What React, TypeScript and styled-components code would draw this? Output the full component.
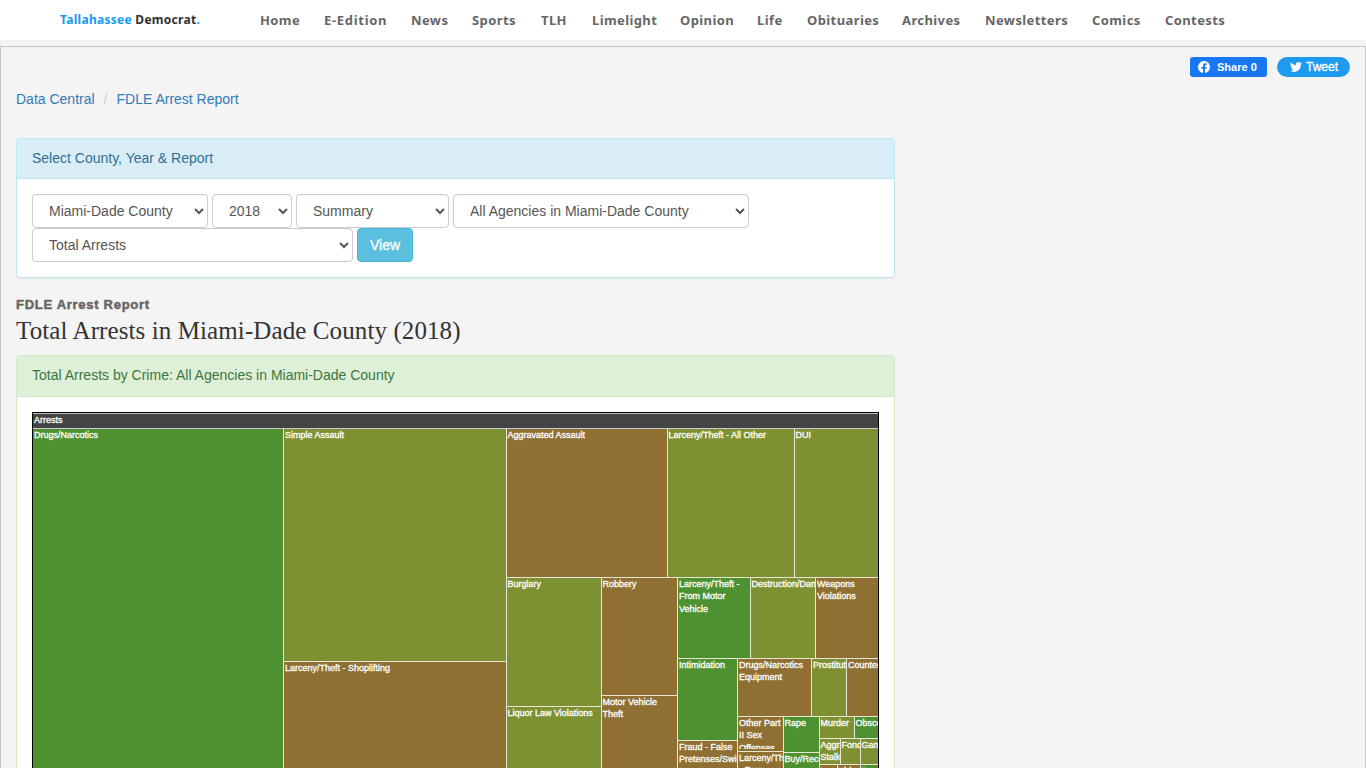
import React from "react";
import styled, { createGlobalStyle } from "styled-components";

const GREEN = "#4d9130";
const OLIVE = "#7e9132";
const BROWN = "#8f7032";

interface TreeNode {
  size: number;
  label?: string;
  color?: string;
  dir?: "row" | "column";
  children?: TreeNode[];
}

const cell = (size: number, label: string, color: string): TreeNode => ({
  size,
  label,
  color
});
const row = (size: number, children: TreeNode[]): TreeNode => ({
  size,
  dir: "row",
  children
});
const column = (size: number, children: TreeNode[]): TreeNode => ({
  size,
  dir: "column",
  children
});

const smallCrimes = column(60, [
  row(22, [cell(35, "Murder", OLIVE), cell(25, "Obscenity", GREEN)]),
  row(26, [
    cell(21, "Aggravated Stalking", OLIVE),
    cell(20, "Fondling", OLIVE),
    cell(19, "Gambling", OLIVE)
  ]),
  row(100, [
    cell(18, "Larceny", BROWN),
    cell(23, "Video", BROWN),
    cell(19, "Purse", GREEN)
  ])
]);

const arrests: TreeNode[] = [
  cell(251, "Drugs/Narcotics", GREEN),
  column(222.5, [
    cell(233, "Simple Assault", OLIVE),
    cell(200, "Larceny/Theft - Shoplifting", BROWN)
  ]),
  column(373.5, [
    row(149, [
      cell(161, "Aggravated Assault", BROWN),
      cell(127, "Larceny/Theft - All Other", OLIVE),
      cell(85.5, "DUI", OLIVE)
    ]),
    row(280, [
      column(95, [
        cell(129, "Burglary", OLIVE),
        cell(151, "Liquor Law Violations", OLIVE)
      ]),
      column(76.5, [
        cell(118, "Robbery", BROWN),
        cell(162, "Motor Vehicle Theft", BROWN)
      ]),
      column(202, [
        row(81, [
          cell(72.5, "Larceny/Theft - From Motor Vehicle", GREEN),
          cell(65.5, "Destruction/Damage", OLIVE),
          cell(64, "Weapons Violations", BROWN)
        ]),
        row(199, [
          column(60, [
            cell(82, "Intimidation", GREEN),
            cell(117, "Fraud - False Pretenses/Swindle", BROWN)
          ]),
          column(142, [
            row(58, [
              cell(74, "Drugs/Narcotics Equipment", BROWN),
              cell(35, "Prostitution", OLIVE),
              cell(33, "Counterfeiting", BROWN)
            ]),
            row(141, [
              column(45.5, [
                cell(35, "Other Part II Sex Offenses", BROWN),
                cell(106, "Larceny/Theft - From Building", BROWN)
              ]),
              column(36, [
                cell(36, "Rape", GREEN),
                cell(105, "Buy/Receive", GREEN)
              ]),
              smallCrimes
            ])
          ])
        ])
      ])
    ])
  ])
];

const TreeItem: React.FC<{ node: TreeNode }> = ({ node }) =>
  node.children ? (
    <Group size={node.size} dir={node.dir}>
      {node.children.map((child, i) => (
        <TreeItem key={i} node={child} />
      ))}
    </Group>
  ) : (
    <Cell size={node.size} color={node.color}>
      <CellLabel>{node.label}</CellLabel>
    </Cell>
  );

const navItems = [
  { label: "Home", width: 64 },
  { label: "E-Edition", width: 87, spacing: 0.7 },
  { label: "News", width: 61 },
  { label: "Sports", width: 69 },
  { label: "TLH", width: 51 },
  { label: "Limelight", width: 88 },
  { label: "Opinion", width: 77 },
  { label: "Life", width: 50 },
  { label: "Obituaries", width: 95 },
  { label: "Archives", width: 83 },
  { label: "Newsletters", width: 107 },
  { label: "Comics", width: 73 },
  { label: "Contests", width: 62 }
];

const filters = [
  { value: "Miami-Dade County", width: 176 },
  { value: "2018", width: 80 },
  { value: "Summary", width: 153 },
  { value: "All Agencies in Miami-Dade County", width: 296 },
  { value: "Total Arrests", width: 321 }
];

const App: React.FC = () => (
  <>
    <GlobalStyle />
    <Header>
      <Logo>
        <LogoBlue>Tallahassee</LogoBlue> Democrat<LogoBlue>.</LogoBlue>
      </Logo>
      <Nav>
        {navItems.map(item => (
          <NavLink key={item.label} width={item.width} spacing={item.spacing}>
            {item.label}
          </NavLink>
        ))}
      </Nav>
    </Header>
    <Page>
      <Social>
        <ShareButton>
          <svg width="12" height="12" viewBox="0 0 24 24">
            <path
              fill="#fff"
              d="M24 12a12 12 0 1 0-13.9 11.85v-8.38H7.08V12h3.02V9.36c0-3 1.8-4.67 4.53-4.67 1.32 0 2.69.24 2.69.24v2.95H15.8c-1.5 0-1.96.93-1.96 1.87V12h3.33l-.53 3.47h-2.8v8.38A12 12 0 0 0 24 12z"
            />
          </svg>
          <span>Share 0</span>
        </ShareButton>
        <TweetButton>
          <svg width="12" height="12" viewBox="0 0 24 24">
            <path
              fill="#fff"
              d="M23.95 4.57a10 10 0 0 1-2.82.77 4.96 4.96 0 0 0 2.16-2.72c-.95.55-2 .96-3.13 1.18a4.92 4.92 0 0 0-8.38 4.48C7.69 8.1 4.07 6.13 1.64 3.16a4.92 4.92 0 0 0 1.52 6.57 4.9 4.9 0 0 1-2.23-.61v.06a4.92 4.92 0 0 0 3.95 4.83 5 5 0 0 1-2.21.08 4.94 4.94 0 0 0 4.6 3.42A9.87 9.87 0 0 1 0 19.54a13.99 13.99 0 0 0 7.55 2.21c9.05 0 14-7.5 14-13.98 0-.21 0-.42-.02-.63a9.94 9.94 0 0 0 2.42-2.57z"
            />
          </svg>
          <span>Tweet</span>
        </TweetButton>
      </Social>
      <Breadcrumb>
        <a>Data Central</a>
        <Slash>/</Slash>
        <a>FDLE Arrest Report</a>
      </Breadcrumb>
      <Content>
        <FilterPanel>
          <InfoHeading>Select County, Year &amp; Report</InfoHeading>
          <FilterBody>
            {filters.map(filter => (
              <Select key={filter.value} width={filter.width}>
                <option>{filter.value}</option>
              </Select>
            ))}
            <ViewButton>View</ViewButton>
          </FilterBody>
        </FilterPanel>
        <Kicker>FDLE Arrest Report</Kicker>
        <Title>Total Arrests in Miami-Dade County (2018)</Title>
        <ChartPanel>
          <ChartHeading>
            Total Arrests by Crime: All Agencies in Miami-Dade County
          </ChartHeading>
          <ChartBody>
            <Treemap>
              <TreemapHeader>Arrests</TreemapHeader>
              <TreemapBody>
                {arrests.map((node, i) => (
                  <TreeItem key={i} node={node} />
                ))}
              </TreemapBody>
            </Treemap>
          </ChartBody>
        </ChartPanel>
      </Content>
    </Page>
  </>
);

const GlobalStyle = createGlobalStyle`
  * {
    box-sizing: border-box;
  }
  body {
    margin: 0;
    background-color: #f4f4f4;
    font-family: "Liberation Sans", Arial, sans-serif;
    font-size: 14px;
    line-height: 20px;
    color: #333;
  }
`;

const Header = styled.header`
  display: flex;
  height: 40px;
  padding-left: 60px;
  background-color: white;
  line-height: 40px;
  white-space: nowrap;
`;

const Logo = styled.div`
  width: 200px;
  font-family: "Noto Sans", sans-serif;
  font-weight: 700;
  font-size: 12px;
  letter-spacing: 0.28px;
  color: #303030;
`;

const LogoBlue = styled.span`
  color: #1698f3;
`;

const Nav = styled.nav`
  display: flex;
`;

const NavLink = styled.a<{ width: number; spacing?: number }>`
  flex: 0 0 ${props => props.width}px;
  font-family: "Noto Sans", sans-serif;
  font-weight: 700;
  font-size: 13px;
  letter-spacing: ${props => props.spacing || 0.4}px;
  color: #666;
`;

const Page = styled.main`
  height: calc(100vh - 46px);
  margin-top: 6px;
  padding: 10px 15px 0;
  border: 1px solid #c6c6c6;
  border-bottom: 0;
  overflow: hidden;
`;

const Social = styled.div`
  display: flex;
  justify-content: flex-end;
  gap: 10px;
  height: 20px;
`;

const ShareButton = styled.div`
  display: flex;
  align-items: center;
  gap: 7px;
  width: 77px;
  padding-left: 8px;
  border-radius: 3px;
  background-color: #1877f2;
  font-weight: 700;
  font-size: 11px;
  color: white;
`;

const TweetButton = styled.div`
  display: flex;
  align-items: center;
  gap: 4px;
  width: 73px;
  padding-left: 13px;
  border-radius: 10px;
  background-color: #1d9bf0;
  font-size: 12px;
  -webkit-text-stroke: 0.3px white;
  color: white;
`;

const Breadcrumb = styled.div`
  display: flex;
  margin-top: 12px;
  color: #337ab7;
`;

const Slash = styled.span`
  padding: 0 9px;
  color: #ccc;
`;

const Content = styled.div`
  width: 879px;
  margin-top: 29px;
`;

const Panel = styled.section`
  border: 1px solid;
  border-radius: 4px;
  background-color: white;
  box-shadow: 0 1px 1px rgba(0, 0, 0, 0.05);
`;

const FilterPanel = styled(Panel)`
  height: 140px;
  border-color: #bce8f1;
`;

const ChartPanel = styled(Panel)`
  border-color: #d6e9c6;
`;

const PanelHeading = styled.div`
  padding: 9px 15px 11px;
  border-bottom: 1px solid;
  border-radius: 3px 3px 0 0;
`;

const InfoHeading = styled(PanelHeading)`
  padding-bottom: 10px;
  border-color: #bce8f1;
  background-color: #d9edf7;
  color: #31708f;
`;

const ChartHeading = styled(PanelHeading)`
  border-color: #d6e9c6;
  background-color: #dff0d8;
  color: #3c763d;
`;

const FilterBody = styled.div`
  display: flex;
  flex-wrap: wrap;
  column-gap: 4px;
  padding: 15px;
`;

const Select = styled.select<{ width: number }>`
  width: ${props => props.width}px;
  height: 34px;
  padding: 6px 0 6px 12px;
  border: 1px solid #ccc;
  border-radius: 4px;
  background-color: white;
  box-shadow: inset 0 1px 1px rgba(0, 0, 0, 0.03);
  font-family: inherit;
  font-size: 14px;
  color: #555;
`;

const ViewButton = styled.button`
  width: 56px;
  height: 34px;
  padding: 0;
  border: 1px solid #46b8da;
  border-radius: 4px;
  background-color: #5bc0de;
  font-family: inherit;
  font-size: 14px;
  -webkit-text-stroke: 0.3px white;
  color: white;
`;

const Kicker = styled.div`
  margin-top: 17px;
  font-weight: 700;
  font-size: 13px;
  -webkit-text-stroke: 0.5px #666;
  letter-spacing: 0.72px;
  color: #666;
`;

const Title = styled.h1`
  margin: 1px 0 9px;
  font-family: "Liberation Serif", serif;
  font-weight: 400;
  font-size: 25px;
  line-height: 30px;
  letter-spacing: 0.1px;
  color: #333;
`;

const ChartBody = styled.div`
  padding: 15px;
`;

const Treemap = styled.div`
  width: 847px;
  border: 1px solid black;
  font-size: 9px;
  line-height: 12.3px;
  -webkit-text-stroke: 0.3px white;
  color: white;
`;

const TreemapHeader = styled.div`
  height: 16px;
  padding: 0 1px;
  border-top: 1px solid #bbb;
  border-bottom: 1px solid #ccc;
  background-color: #444;
`;

const TreemapBody = styled.div`
  display: flex;
  height: 433px;
  overflow: hidden;
`;

const Group = styled.div<{ size: number; dir?: string }>`
  display: flex;
  flex: 0 0 ${props => props.size}px;
  flex-direction: ${props => props.dir};
  overflow: hidden;
`;

const Cell = styled.div<{ size: number; color?: string }>`
  flex: 0 0 ${props => props.size}px;
  padding: 0 0 2px 0.9px;
  border-right: 1px solid #e6e6d2;
  border-bottom: 1px solid #e6e6d2;
  overflow: hidden;
  background-color: ${props => props.color};
`;

const CellLabel = styled.div`
  height: 100%;
  overflow: hidden;
`;

export default App;
